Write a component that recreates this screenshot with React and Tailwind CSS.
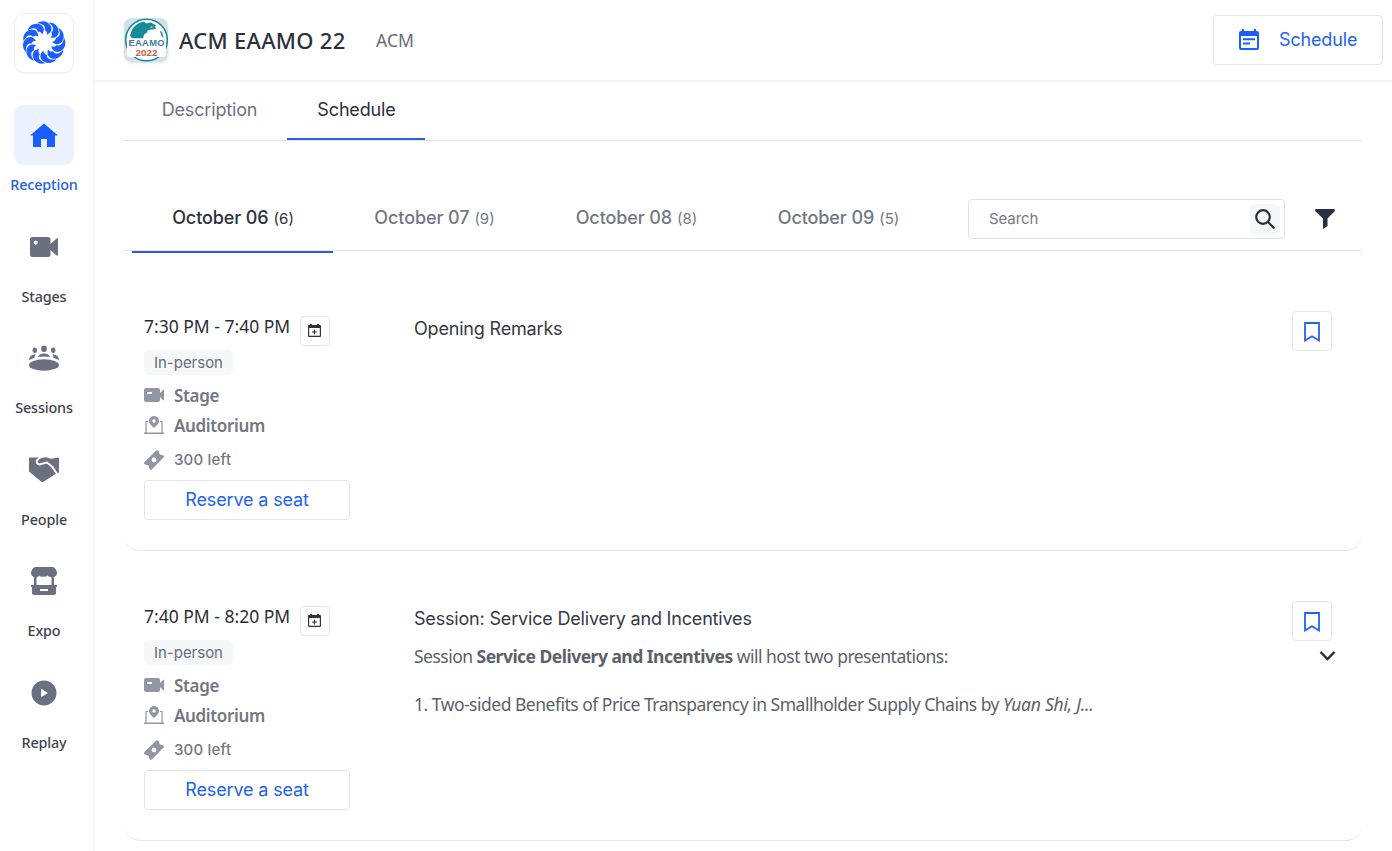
import React from "react";

const seg = "font-['Noto_Sans',sans-serif]";

function Petals() {
  const petals = Array.from({ length: 11 }, (_, i) => (i * 360) / 11);
  return (
    <svg width="44" height="44" viewBox="-22 -21.500 44 44" fill="#1a5eff">
      {petals.map((a) => (
        <path key={a} transform={`rotate(${a})`} d="M-7.200 -19.200C-3 -22.600 4 -22 6.800 -16.600C8.600 -12.800 7 -9.600 2.800 -7.600C3.400 -9.600 2.800 -11.300 0.600 -12.800C2.200 -16 -1 -19.200 -7.200 -19.200Z" />
      ))}
    </svg>
  );
}

function Camera() {
  return (
    <svg width="28" height="20" viewBox="0 0 28 20" fill="currentColor">
      <path fillRule="evenodd" d="M2.500 0H18a2.500 2.500 0 0 1 2.500 2.500v4.500L26 2q2-1.600 2 .5v15q0 2.100-2 .5L20.500 13v4.500A2.500 2.500 0 0 1 18 20H2.500A2.500 2.500 0 0 1 0 17.500v-15A2.500 2.500 0 0 1 2.500 0zM5.700 3.500a2.100 2.100 0 1 0 .01 4.200 2.100 2.100 0 0 0-.01-4.200z" />
    </svg>
  );
}

function NavItem({ label, children, active }) {
  return (
    <div className="flex h-[111.500px] flex-col items-center">
      <div className={active ? "flex size-[60px] items-center justify-center rounded-[9px] bg-[#ebf1ff] text-[#1a5eff]" : "flex size-[60px] items-center justify-center text-[#6b7080]"}>
        {children}
      </div>
      <div className={active ? "mt-2 text-[14.400px] leading-6 font-medium whitespace-nowrap text-[#2560e0]" : "mt-2 text-[14.400px] leading-6 font-medium whitespace-nowrap text-[#3f434f]"}>{label}</div>
    </div>
  );
}

function Sidebar() {
  return (
    <aside className={`flex w-[95px] shrink-0 flex-col border-r-2 border-[#f5f6fb] pt-[13px] pr-[5px] tracking-[-0.150px] ${seg}`}>
      <div className="mx-auto mb-8 flex size-[60px] items-center justify-center rounded-[10px] border border-[#eff0f3] shadow-xs"><Petals /></div>
      <NavItem label="Reception" active>
        <svg width="28" height="26" viewBox="0 0 28 26" fill="currentColor"><path d="M14 1.500L0 13.500h3v11.500h8v-8h6v8h8V13.500h3z" /></svg>
      </NavItem>
      <NavItem label="Stages"><Camera /></NavItem>
      <NavItem label="Sessions">
        <svg width="30" height="26" viewBox="0 0 30 26" fill="currentColor">
          <ellipse cx="15" cy="20" rx="15" ry="5.800" />
          <ellipse cx="15" cy="3.800" rx="2.800" ry="3.200" /><ellipse cx="5.800" cy="5.200" rx="2.200" ry="2.700" /><ellipse cx="24.200" cy="5.200" rx="2.200" ry="2.700" />
          <path d="M9 12Q10 8.500 15 8.500t6 3.500Q15 11 9 12zM0 15.300Q0 9.500 6.500 9.500q-1 2-1 3.200Q2 13.800 0 15.300zM30 15.300q0-5.800-6.500-5.800 1 2 1 3.200 3.500 1.100 5.500 2.600z" />
        </svg>
      </NavItem>
      <NavItem label="People">
        <svg width="30" height="26" viewBox="0 0 30 26">
          <path fill="currentColor" d="M0 .5h9l4 .3L17.500.3 22 1.800 30 .5v15L26.500 17 14.500 24.700Q13 25.700 11.500 24L0 14.500z" />
          <path fill="none" stroke="#fff" strokeWidth="2" strokeLinejoin="round" d="M13.500-1L9.500 1.800Q7 3.700 8 5.900Q9.600 8.300 12.500 6.900L18 5.500l5.500 4.600L28 17" />
        </svg>
      </NavItem>
      <NavItem label="Expo">
        <svg width="26" height="28" viewBox="0 0 26 28" fill="currentColor">
          <path d="M4 0h18q3 1 4 5.500Q26 9 23 10v8h3v2h-1v6q0 2-2 2H3q-2 0-2-2v-6H0v-2h3v-8Q0 9 0 5.500 1 1 4 0z" />
          <path fill="#fff" d="M5.500 10q2 0 3-1.500 1 2 4 1 2 1 4-1 2 2 4 1.500v8h-15zM9 22h8v2H9z" />
        </svg>
      </NavItem>
      <NavItem label="Replay">
        <svg width="26" height="26" viewBox="0 0 26 26" fill="currentColor"><circle cx="13" cy="13" r="12.500" /><path fill="#fff" d="M10 8.700l7 4.300-7 4.300z" /></svg>
      </NavItem>
    </aside>
  );
}

function EventLogo() {
  return (
    <svg className="rounded-lg shadow-sm" width="44" height="44" viewBox="0 0 44 44">
      <rect width="44" height="44" fill="#d5e1e9" />
      <circle cx="22.500" cy="22" r="20.800" fill="#fff" stroke="#16899b" strokeWidth="1.600" />
      <path fill="#16899b" d="M6 17.500Q8 8.500 15 5l5-1.500 2 2 5-1 5 3-2 1.500-3-.5-3 3-1 3-3 2-1 4H8zM22 9l6 .5 3-1 1 2.500-8 1zM36 13l2 1 1.500 6-2-2z" />
      <rect x="3" y="20.500" width="39" height="18.500" rx="2" fill="#fff" />
      <text x="4.500" y="28.400" textLength="36" lengthAdjust="spacing" fontFamily="Liberation Sans, sans-serif" fontSize="9.300" fontWeight="700" fill="#3a7a9f">EAAMO</text>
      <text x="11.500" y="37.900" textLength="22" lengthAdjust="spacingAndGlyphs" fontFamily="Liberation Sans, sans-serif" fontSize="9.500" fontWeight="700" fill="#d6553c">2022</text>
    </svg>
  );
}

function Header() {
  return (
    <header className="flex h-[82px] shrink-0 items-center border-b-2 border-[#f5f5f7] pr-[9px] pl-[29px]">
      <EventLogo />
      <h1 className={`ml-[11px] w-[197px] text-[22px] leading-8 font-medium tracking-[0.270px] whitespace-nowrap text-[#2c303c] ${seg}`}>ACM EAAMO 22</h1>
      <span className={`text-[17.500px] tracking-[0.100px] text-[#686c79] ${seg}`}>ACM</span>
      <button className="ml-auto flex h-[50px] w-[170px] items-center rounded-[4px] border border-[#e3e4e8] pl-[25px] text-[18px] tracking-[-0.150px] text-[#2463ed]">
        <svg width="20" height="22" viewBox="0 0 20 22" fill="#1a5eff"><path fillRule="evenodd" d="M3 0h2v2h10V0h2v2h1q2 0 2 2v15q0 2-2 2H2q-2 0-2-2V4Q0 2 2 2h1zM2 7v12h16V7zM4 9.300h12v1.900H4zM4 13.500h7v1.900H4z" /></svg>
        <span className="ml-[20px] pb-px">Schedule</span>
      </button>
    </header>
  );
}

function DateTab({ date, count, active }) {
  return (
    <div className={active ? "flex h-[67px] w-[201px] items-start justify-center border-b-2 border-[#315dcc] pt-[20px] pl-px text-[#2c303c]" : "flex h-[67px] w-[202px] items-start justify-center pt-[20px] pl-px text-[#737783]"}>
      <span className="text-[18px] leading-6 font-medium tracking-[-0.100px]">{date}</span>
      <span className="ml-[5px] pt-px text-[15px] leading-6 tracking-[0px]">({count})</span>
    </div>
  );
}

function Session({ time, title, children }) {
  return (
    <section className="flex h-[290px] w-[1238px] shrink-0 rounded-b-[16px] border-b border-[#e5e6e9] pt-[50px] pr-[30px] pl-5">
      <div className="flex w-[270px] flex-col items-start">
        <div className="flex h-[39px] items-start">
          <span className={`mt-[3px] w-[156px] text-[17.500px] leading-6 tracking-[0px] whitespace-nowrap text-[#292d38] ${seg}`}>{time}</span>
          <button className="mt-[5px] flex size-[30px] items-center justify-center rounded-[4px] border border-[#e3e4e8] pr-px text-[#30333e]">
            <svg width="13" height="14" viewBox="0 0 13 14" fill="currentColor"><path fillRule="evenodd" d="M2 0h2v1h5V0h2v1h1q1 0 1 1v10q0 1-1 1H1q-1 0-1-1V2q0-1 1-1h1zM1.200 4v7.800h10.600V4zM5.900 5.500h1.200v1.900H9v1.200H7.100v1.900H5.900V8.600H4V7.400h1.900z" /></svg>
          </button>
        </div>
        <span className="flex h-[25px] items-center rounded-[5px] bg-[#f6f7f9] px-[10px] pt-px text-[15px] tracking-[-0.020px] text-[#686c78]">In-person</span>
        <div className={`mt-[6px] flex h-[30px] items-center text-[17px] font-semibold tracking-[-0.350px] text-[#737782] ${seg}`}>
          <svg className="mr-[10px] mb-[2px] text-[#9196a4]" width="20" height="14" viewBox="0 0 20 14" fill="currentColor"><path fillRule="evenodd" d="M2 0h12q2 0 2 2v3l3-3q1-1 1 0v10q0 1-1 0l-3-3v3q0 2-2 2H2q-2 0-2-2V2Q0 0 2 0zM3 4v2h5V4z" /></svg>Stage
        </div>
        <div className={`flex h-[30px] items-center text-[17px] font-semibold tracking-[-0.350px] text-[#737782] ${seg}`}>
          <svg className="mr-[10px] mb-[2px] text-[#9196a4]" width="20" height="18" viewBox="0 0 20 18" fill="currentColor"><path fillRule="evenodd" d="M10 0a5 5 0 0 1 5 5q0 3-5 7-5-4-5-7a5 5 0 0 1 5-5zm0 3.300a1.700 1.700 0 1 0 .01 3.400A1.700 1.700 0 0 0 10 3.300z" /><path d="M0 16.500h20V18H0z" /><path d="M4 5.500H2V17M16 5.500h2V17" fill="none" stroke="currentColor" strokeWidth="1.200" /></svg>Auditorium
        </div>
        <div className="mt-1 flex h-[30px] items-center text-[15px] font-medium tracking-[0.200px] text-[#737782]">
          <svg className="mr-[10px] text-[#9196a4]" width="20" height="20" viewBox="0 0 20 20" fill="currentColor"><path fillRule="evenodd" d="M12 .8q1-1 2-.3l1 1Q14.500 4.500 18.500 5l1 .5q1 1 0 2L8 19.300q-1 1-2 0l-1-1.300q.5-3-3-3l-1.500-1q-1-1 0-2zM10 7.600a2.400 2.400 0 1 0 .01 4.800A2.400 2.400 0 0 0 10 7.600z" /></svg>300 left
        </div>
        <button className="mt-[5px] h-10 w-[206px] rounded-[4px] border border-[#e3e4e8] pb-[2px] text-[18px] tracking-[-0.150px] text-[#2463ed]">Reserve a seat</button>
      </div>
      <div className="min-w-0 flex-1 pt-[6px]">
        <h2 className="text-[18px] leading-6 tracking-[-0.180px] text-[#353944]">{title}</h2>
        {children}
      </div>
      <div className="flex w-10 flex-col items-end">
        <button className="flex size-10 shrink-0 items-center justify-center rounded-[4px] border border-[#e3e4e8] pt-px">
          <svg width="16" height="20" viewBox="0 0 16 20" fill="none" stroke="#2463ed" strokeWidth="1.800"><path d="M1 1h14v17.500l-7-4.300-7 4.300z" /></svg>
        </button>
        {children && <svg className="mt-[10px] -mr-[4px] shrink-0" width="17" height="10" viewBox="0 0 17 10" fill="none" stroke="#292d38" strokeWidth="2.400"><path d="M1.500 1l7 7 7-7" /></svg>}
      </div>
    </section>
  );
}

export default function App() {
  return (
    <div className="flex h-[851px] w-[1392px] overflow-hidden bg-white font-['Inter',sans-serif]">
      <Sidebar />
      <div className="flex min-w-0 flex-1 flex-col">
        <Header />
        <main className="flex min-h-0 flex-1 flex-col overflow-hidden pl-[29px]">
          <nav className="flex h-[59px] w-[1238px] shrink-0 border-b border-[#e1e2e6] pl-[8px] text-[18px] tracking-[-0.150px]">
            <div className="w-[155px] pt-[14px] text-center text-[#6e727e]"><span className="leading-7">Description</span></div>
            <div className="h-[58px] w-[138px] border-b-2 border-[#2860dc] pt-[14px] pl-px text-center text-[#2c303c]"><span className="leading-7">Schedule</span></div>
          </nav>
          <div className="mt-[45px] flex h-[65px] w-[1238px] shrink-0 border-b border-[#e1e2e6] pl-[8px]">
            <DateTab date="October 06" count="6" active />
            <DateTab date="October 07" count="9" />
            <DateTab date="October 08" count="8" />
            <DateTab date="October 09" count="5" />
            <div className="mt-[13px] ml-[29px] flex h-10 w-[317px] items-center rounded-[4px] border border-[#e1e2e6] pr-[4px] pl-[20px] text-[15px] tracking-[-0.100px] text-[#757985]">
              <span className="flex-1">Search</span>
              <span className="flex size-[30px] items-center justify-center rounded-[4px] bg-[#f6f7f9]">
                <svg width="20" height="20" viewBox="0 0 20 20" fill="none" stroke="#292d38" strokeWidth="2.200"><circle cx="8" cy="8" r="6.800" /><path d="M13 13l6.500 6.500" /></svg>
              </span>
            </div>
            <svg className="mt-[23px] ml-[30px]" width="20" height="20" viewBox="0 0 20 20" fill="#292f40"><path d="M.8 0h18.400q1 .5.500 2.200L12.500 9.500V17L8 20V9.500L.3 2.200Q-.2.500.8 0z" /></svg>
          </div>
          <div className="flex flex-col pt-[10px]">
            <Session time="7:30 PM - 7:40 PM" title="Opening Remarks" />
            <Session time="7:40 PM - 8:20 PM" title="Session: Service Delivery and Incentives">
              <div className={`pt-[13px] text-[17.500px] leading-6 whitespace-nowrap text-[#5c6069] ${seg}`}>
                <p className="tracking-[-0.520px]">Session <b>Service Delivery and Incentives</b> will host two presentations:</p>
                <p className="mt-6"><span className="tracking-[-0.500px]">1. Two-sided Benefits of Price Transparency in Smallholder Supply Chains by </span><i className="tracking-[-0.250px]">Yuan Shi, J...</i></p>
              </div>
            </Session>
          </div>
        </main>
      </div>
    </div>
  );
}
